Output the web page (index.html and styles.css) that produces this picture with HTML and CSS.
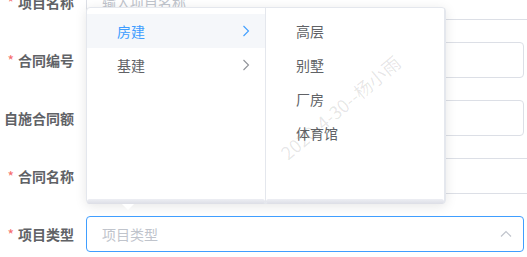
FILE: index.html
```html
<!DOCTYPE html>
<html lang="zh-CN">
<head>
    <meta charset="UTF-8">
    <meta name="viewport" content="width=device-width, initial-scale=1.0">
    <title>项目信息</title>
    <link rel="stylesheet" href="styles.css">
</head>
<body>
    <form class="project-form">
        <div class="form-item">
            <label class="form-label required">项目名称</label>
            <div class="input input-wide">
                <input type="text" placeholder="输入项目名称">
            </div>
        </div>
        <div class="form-item">
            <label class="form-label required">合同编号</label>
            <div class="input">
                <input type="text">
            </div>
        </div>
        <div class="form-item">
            <label class="form-label">自施合同额</label>
            <div class="input">
                <input type="text">
            </div>
        </div>
        <div class="form-item">
            <label class="form-label required">合同名称</label>
            <div class="input input-wide">
                <input type="text">
            </div>
        </div>
        <div class="form-item">
            <label class="form-label required">项目类型</label>
            <div class="input is-focus">
                <input type="text" placeholder="项目类型" readonly>
                <svg class="input-arrow" width="12" height="8" viewBox="0 0 12 8">
                    <path d="M1 6.5 L6 1.5 L11 6.5" fill="none" stroke="#c0c4cc" stroke-width="1.2"/>
                </svg>
            </div>
        </div>
    </form>

    <div class="cascader-dropdown">
        <div class="cascader-menu">
            <div class="cascader-node active">
                <span>房建</span>
                <svg class="node-arrow" width="8" height="12" viewBox="0 0 8 12">
                    <path d="M1.5 1 L6.5 6 L1.5 11" fill="none" stroke="currentColor" stroke-width="1.1"/>
                </svg>
            </div>
            <div class="cascader-node">
                <span>基建</span>
                <svg class="node-arrow" width="8" height="12" viewBox="0 0 8 12">
                    <path d="M1.5 1 L6.5 6 L1.5 11" fill="none" stroke="currentColor" stroke-width="1.1"/>
                </svg>
            </div>
        </div>
        <div class="cascader-menu">
            <div class="cascader-node"><span>高层</span></div>
            <div class="cascader-node"><span>别墅</span></div>
            <div class="cascader-node"><span>厂房</span></div>
            <div class="cascader-node"><span>体育馆</span></div>
        </div>
        <div class="popper-arrow"></div>
    </div>

    <div class="watermark">2020-4-30--杨小雨</div>
</body>
</html>
```

FILE: styles.css
```css
body {
    margin: 0;
    font-family: "Noto Sans CJK SC", "Noto Sans", sans-serif;
    font-size: 14px;
    color: #606266;
    background: #fff;
    overflow: hidden;
}

.project-form {
    margin-top: -16px;
}

.form-item {
    display: flex;
    height: 36px;
    margin-bottom: 22px;
}

.form-label {
    width: 86px;
    flex-shrink: 0;
    box-sizing: border-box;
    padding-right: 12px;
    text-align: right;
    line-height: 36px;
    font-weight: bold;
    color: #606266;
}

.form-label.required::before {
    content: "*";
    color: #f56c6c;
    margin-right: 4px;
    font-weight: normal;
}

.input {
    position: relative;
    width: 438px;
    flex-shrink: 0;
}

.input-wide {
    width: 470px;
}

.input input {
    width: 100%;
    height: 36px;
    box-sizing: border-box;
    padding: 0 15px;
    border: 1px solid #dcdfe6;
    border-radius: 4px;
    font-family: inherit;
    font-size: 14px;
    color: #606266;
    outline: none;
}

.input input::placeholder {
    color: #c0c4cc;
}

.input.is-focus input {
    border-color: #409eff;
}

.input-arrow {
    position: absolute;
    right: 12px;
    top: 14px;
}

.cascader-dropdown {
    position: absolute;
    left: 86px;
    top: 7px;
    display: flex;
    width: 360px;
    height: 197px;
    box-sizing: border-box;
    border: 1px solid #e4e7ed;
    border-radius: 4px;
    background: #fff;
    box-shadow: 0 2px 12px 0 rgba(0, 0, 0, 0.1);
}

.cascader-menu {
    position: relative;
    flex: 1;
    padding: 6px 0;
    border-right: 1px solid #e4e7ed;
}

.cascader-menu:last-of-type {
    border-right: none;
}

.cascader-menu::after {
    content: "";
    position: absolute;
    left: 0;
    right: 0;
    bottom: -1px;
    height: 5px;
    border-radius: 4px;
    background: linear-gradient(#edeef3, #dcdee6);
}

.cascader-node {
    display: flex;
    align-items: center;
    justify-content: space-between;
    height: 34px;
    padding: 0 15px 0 30px;
    color: #606266;
}

.cascader-node.active {
    background: #f5f7fa;
    color: #409eff;
}

.node-arrow {
    color: #909399;
}

.cascader-node.active .node-arrow {
    color: #409eff;
}

.popper-arrow {
    position: absolute;
    left: 35px;
    bottom: -7px;
    width: 0;
    height: 0;
    border-left: 6px solid transparent;
    border-right: 6px solid transparent;
    border-top: 6px solid #fff;
}

.watermark {
    position: absolute;
    left: 250px;
    top: 94px;
    width: 180px;
    text-align: center;
    font-size: 18px;
    color: rgba(0, 0, 0, 0.1);
    transform: rotate(-40deg);
    white-space: nowrap;
    pointer-events: none;
}
```
